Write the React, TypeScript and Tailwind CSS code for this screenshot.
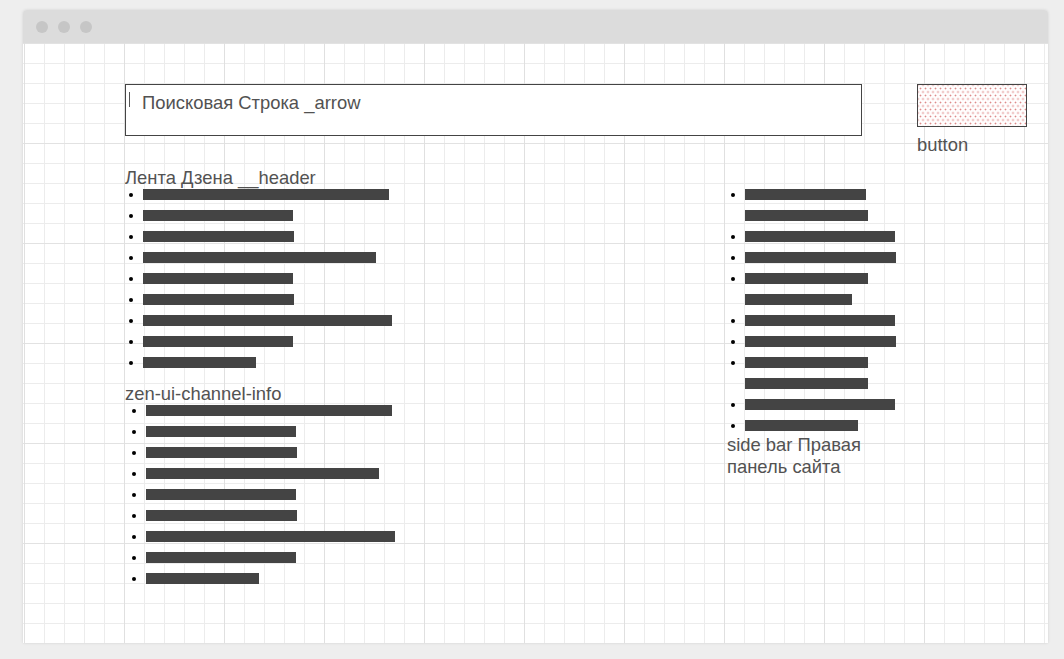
import React from 'react';

const feedBars = [246, 150, 151, 233, 150, 151, 249, 150, 113];

const sideBars = [
  { w: 121, dot: true },
  { w: 123, dot: false },
  { w: 150, dot: true },
  { w: 151, dot: true },
  { w: 123, dot: true },
  { w: 107, dot: false },
  { w: 150, dot: true },
  { w: 151, dot: true },
  { w: 123, dot: true },
  { w: 123, dot: false },
  { w: 150, dot: true },
  { w: 113, dot: true },
];

function BarRow({ width, dot = true, indent = 4 }: { width: number; dot?: boolean; indent?: number }) {
  return (
    <li className="h-[21px] pt-[1px]">
      <div className="flex h-[11px] items-center">
        <div
          className={dot ? 'h-[4px] w-[4px] rounded-full bg-black' : 'h-[4px] w-[4px]'}
          style={{ marginLeft: indent }}
        />
        <div className="ml-[10px] h-[11px] bg-[#444]" style={{ width }} />
      </div>
    </li>
  );
}

export default function App() {
  return (
    <div className="h-[659px] w-full overflow-hidden bg-[#eeeeee] pl-[23px] pt-[10px] font-['Liberation_Sans',Arial,sans-serif] text-[18.4px] leading-[21px] text-[#525252]">
      <div className="flex h-[633px] w-[1025px] flex-col rounded-t-[4px] shadow-[0_0_3px_rgba(0,0,0,0.12)]">
        {/* window chrome */}
        <div className="flex h-[33px] items-center gap-[10px] rounded-t-[4px] bg-[#dcdcdc] pl-[13px]">
          <span className="h-[12px] w-[12px] rounded-full bg-[#c6c6c6]" />
          <span className="h-[12px] w-[12px] rounded-full bg-[#c6c6c6]" />
          <span className="h-[12px] w-[12px] rounded-full bg-[#c6c6c6]" />
        </div>

        {/* canvas */}
        <div className="flex-1 bg-white bg-[linear-gradient(to_right,#e0e0e0_1px,transparent_1px),linear-gradient(to_bottom,#e2e2e2_1px,transparent_1px),linear-gradient(to_right,#ececec_1px,transparent_1px),linear-gradient(to_bottom,#ececec_1px,transparent_1px)] bg-[size:100px_100px,100px_100px,20px_20px,20px_20px] bg-[position:1px_0,0_0,1px_0,0_0] pl-[102px] pt-[41px]">
          {/* top row */}
          <div className="flex h-[52px] items-start">
            <div className="flex h-[52px] w-[737px] items-start border border-[#444] bg-white pl-[3px] pt-[7px]">
              <div className="h-[15px] w-px bg-[#555]" />
              <span className="ml-[12px]">Поисковая Строка _arrow</span>
            </div>
            <div className="ml-[55px] flex flex-col">
              <div className="h-[43px] w-[110px] border border-[#444] bg-[#fffdfd] bg-[radial-gradient(circle,#de8a8a_0.8px,transparent_1.1px),radial-gradient(circle,#de8a8a_0.8px,transparent_1.1px)] bg-[size:5px_7px] bg-[position:0_0,2.5px_3.5px]" />
              <span className="mt-[7px]">button</span>
            </div>
          </div>

          {/* main row */}
          <div className="mt-[31px] flex">
            <div className="flex w-[602px] flex-col">
              <div>Лента Дзена __header</div>
              <ul>
                {feedBars.map((w, i) => (
                  <BarRow key={i} width={w} />
                ))}
              </ul>
              <div className="mt-[6px]">zen-ui-channel-info</div>
              <ul>
                {feedBars.map((w, i) => (
                  <BarRow key={i} width={w} indent={7} />
                ))}
              </ul>
            </div>

            <div className="mt-[21px] flex w-[170px] flex-col">
              <ul>
                {sideBars.map((b, i) => (
                  <BarRow key={i} width={b.w} dot={b.dot} />
                ))}
              </ul>
              <div className="-mt-[6px] leading-[22px]">side bar Правая панель сайта</div>
            </div>
          </div>
        </div>
      </div>
    </div>
  );
}
